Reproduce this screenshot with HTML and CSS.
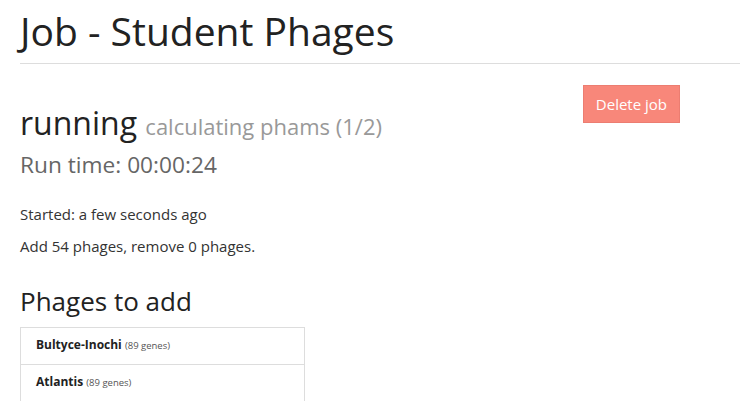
FILE: index.html
```html
<!DOCTYPE html>
<html>
<head>
<meta charset="utf-8">
<link rel="stylesheet" href="styles.css">
</head>
<body>
<div class="container">
  <h1 class="page-title">Job - Student Phages</h1>
  <div class="status-row">
    <div class="status">
      <h2 class="state">running <small class="step">calculating phams (1/2)</small></h2>
      <h3 class="runtime">Run time: 00:00:24</h3>
    </div>
    <div class="actions">
      <button class="btn-delete">Delete job</button>
    </div>
  </div>
  <p class="info first">Started: a few seconds ago</p>
  <p class="info">Add 54 phages, remove 0 phages.</p>
  <h3 class="section">Phages to add</h3>
  <ul class="list">
    <li class="item"><b>Bultyce-Inochi</b> <small>(89 genes)</small></li>
    <li class="item"><b>Atlantis</b> <small>(89 genes)</small></li>
  </ul>
</div>
</body>
</html>
```
FILE: styles.css
```css
html, body {
  margin: 0;
  padding: 0;
  background: #fff;
}
body {
  font-family: "Open Sans", "DejaVu Sans", sans-serif;
  color: #222;
  font-size: 15px;
  line-height: 20px;
}
.container {
  padding: 0 5px 0 20px;
}
.page-title {
  font-size: 39px;
  font-weight: 400;
  margin: 8px 0 0;
  padding-bottom: 8px;
  border-bottom: 1px solid #ddd;
  line-height: 1.2;
}
.status-row {
  display: flex;
  justify-content: space-between;
  align-items: flex-start;
}
.state {
  font-size: 32px;
  font-weight: 400;
  margin: 41px 0 0;
  line-height: 1.1;
}
.step {
  font-size: 22px;
  color: #999;
}
.runtime {
  font-size: 22.7px;
  font-weight: 400;
  color: #666;
  margin: 13.5px 0 0;
  line-height: 1.1;
}
.actions {
  padding: 21px 60px 0 0;
}
.btn-delete {
  font-family: inherit;
  font-size: 15px;
  color: #fff;
  background: #f8877a;
  border: 1px solid #ec7d71;
  padding: 8px 12px;
  line-height: 20px;
}
.info {
  margin: 12px 0 0;
  color: #333;
}
.info.first {
  margin-top: 25.5px;
}
.section {
  font-size: 26px;
  font-weight: 400;
  margin: 31.3px 0 0;
  line-height: 1.1;
}
.list {
  list-style: none;
  margin: 11px 0 0;
  padding: 0;
  width: 285px;
}
.item {
  border: 1px solid #ddd;
  padding: 7px 15px 9px;
  margin-bottom: -1px;
  font-size: 12px;
  line-height: 20px;
  height: 20px;
}
.item small {
  font-size: 9.5px;
  color: #555;
}
```
